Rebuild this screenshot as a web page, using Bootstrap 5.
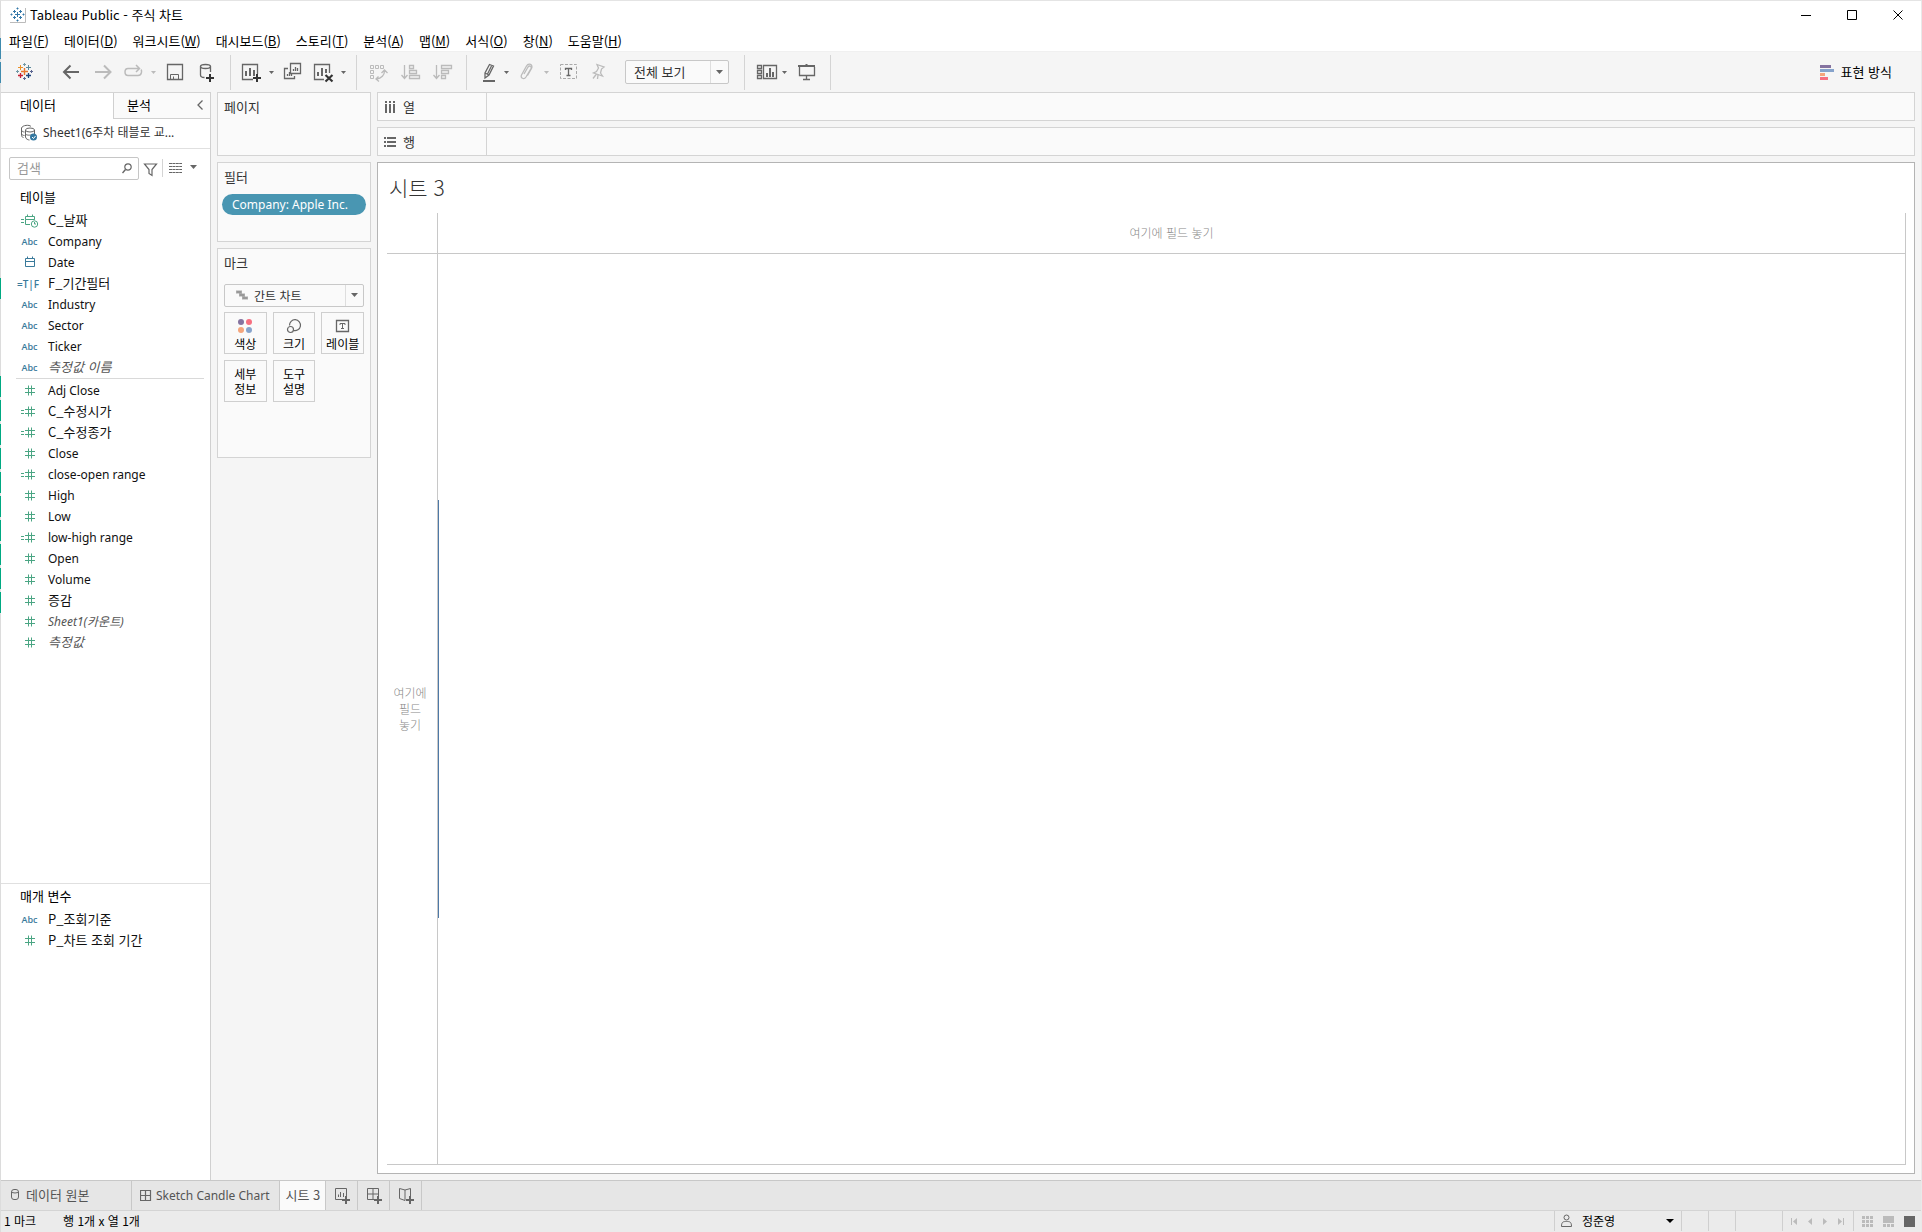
<!DOCTYPE html>
<html lang="ko">
<head>
<meta charset="utf-8">
<meta name="viewport" content="width=device-width, initial-scale=1">
<title>Tableau Public - 주식 차트</title>
<link href="https://cdn.jsdelivr.net/npm/bootstrap@5.3.0/dist/css/bootstrap.min.css" rel="stylesheet">
<style>
body{font-family:"Noto Sans CJK KR",sans-serif;font-size:13px;line-height:20px;color:#111;background:#fff}
.latin{font-family:"Noto Sans","Noto Sans CJK KR",sans-serif;font-size:12px}
button,select,input{font:inherit;color:inherit}
button{background:none;border:0;padding:0}
svg{display:block;flex:none;fill:none;stroke:#666}
.window{min-height:100vh;border-left:1px solid #dcdcdc;border-top:1px solid #e4e4e4;border-right:1px solid #e9e9e9;position:relative}
.edge{position:absolute;left:-1px;width:1px}
.edge-blue{top:37px;height:45px;background:repeating-linear-gradient(#3f8bae 0 21px,#e4e4e4 21px 24px)}
.edge-teal{top:277px;height:21px;background:#00a982}
.edge-teals{top:375px;height:238px;background:repeating-linear-gradient(#00a982 0 21px,#e4e4e4 21px 24px)}
.titlebar{height:30px;padding:3px 15px 6px 9px;color:#000}
.winbtns{gap:31px;padding-top:1px}
.menubar{height:20px;padding-left:8px;gap:15px;color:#000}
.menubar a{color:inherit;text-decoration:none;white-space:nowrap}
.toolbar{height:41px;background:#f5f5f5;padding-top:4px;border-top:1px solid #f0f0f0}
.tgroup{height:35px;padding:0 7px 0 6px;border-right:1px solid #d4d4d4;margin-top:-1px}
.tgroup:first-child{padding:0 8px 0 7px}
.dim svg,svg.dim{stroke:#bbb}
.caret{stroke:none;fill:#666}
.dim .caret,.caret.dim{fill:#bbb;stroke:none}
.pick{position:relative;border:1px solid #c8c8c8;border-radius:2px;background:#fafafa;display:flex}
.pick select{appearance:none;border:0;background:transparent;width:100%;padding:0;outline:0;color:#333}
.pick .drop{position:absolute;right:0;top:0;bottom:0;width:18px;border-left:1px solid #dedede;pointer-events:none;display:flex;align-items:center;justify-content:center}
.fitpick{width:104px;height:24px;margin:5px 8px 0 8px}
.fitpick select{padding-left:8px}
.showme{margin:6px 29px 0 auto;gap:6px;color:#000}
.side{width:210px;border-right:1px solid #d0d0d0;background:#fff}
.side-tabs{height:27px;border-top:1px solid #d4d4d4}
.side-tabs .tab-on{width:112px;padding:0 0 2px 19px;text-align:left;color:#000}
.side-tabs .tab-off{flex:1;padding:0 6px 1px 13px;background:#fafafa;border-left:1px solid #d0d0d0;border-bottom:1px solid #d0d0d0;color:#000}
.source{height:30px;padding:0 0 1px 19px;gap:5px;border-bottom:1px solid #e0e0e0;color:#333}
.tools{padding:8px 13px 0 8px;height:32px}
.search{flex:none;width:130px;height:23px;border:1px solid #c6c6c6;border-radius:2px;padding:0 6px 0 7px}
.search input{border:0;outline:0;width:100%;padding:0 0 1px;background:none;min-width:0}
.search input::placeholder{color:#999;opacity:1}
.sep{width:1px;height:18px;background:#d4d4d4;margin:2px 6px 0 4px}
.viewas{height:21px;gap:8px}
.sect{padding-left:19px;margin:0;font-size:13px;font-weight:400;color:#000}
.fields-h{height:29px;line-height:31px}
.params-h{height:25px;line-height:23px}
.fields{list-style:none;margin:0;padding:0}
.fields a{display:flex;height:21px;line-height:19px;padding-left:17px;color:#111;text-decoration:none;align-items:flex-start;gap:8px;white-space:nowrap}
.fields .latin a{line-height:21px}
.fields svg{stroke:#4aa583;width:22px;height:21px}
.fields .dimn svg{stroke:#3a7a9b}
.tag{width:22px;padding-left:1px;text-align:center;font:600 9px/22px "Open Sans",sans-serif;color:#3a7a9b}
.tag.tf{margin-left:-2px;margin-right:2px;font-size:10px;white-space:nowrap}
.fields i{color:#555}
.rule{border-top:1px solid #d9d9d9;margin:0 6px 1px 15px}
.params{height:297px;border-top:1px solid #e0e0e0}
.main{background:#f5f5f5}
.shelves{width:154px;margin:0 6px;gap:6px}
.panel{background:#fafafa;border:1px solid #d4d4d4;padding:4px 6px;color:#333}
.pages{height:64px}.filters{height:80px}.marks{height:210px}
.panel h2{font-size:13px;font-weight:400;line-height:20px;margin:0}
.pill{display:block;width:144px;height:21px;border-radius:11px;background:#4996b2;color:#fff;text-align:left;padding-left:10px;line-height:20px;margin:7px -3px 0 -2px}
.markpick{height:23px;margin-top:11px}
.markpick select{padding-left:29px;font-size:12px;line-height:20px}
.markpick .gantt{position:absolute;left:11px;top:5px;pointer-events:none}
.markgrid{display:grid;grid-template-columns:repeat(3,1fr);gap:6px;margin-top:5px}
.markgrid button{height:42px;border:1px solid #cfcfcf;font-size:12px;line-height:15px;color:#000;display:flex;flex-direction:column;align-items:center;justify-content:center}
.markgrid button.pic{justify-content:flex-start;padding-top:5px}
.work{margin-right:6px;gap:6px;min-width:0}
.shelf{height:29px;border:1px solid #d4d4d4;background:#fafafa}
.shelf>div{width:109px;border-right:1px solid #d4d4d4;padding-left:6px;gap:7px;color:#333}
.sheet{border:1px solid #b4b4b4;background:#fff;margin-bottom:6px;padding:8px 8px 8px 9px}
.sheet h1{font-size:21px;line-height:33px;font-weight:300;color:#333;margin:0;height:42px;padding-left:2px}
.crosstab{display:grid;grid-template-columns:51px 1fr;grid-template-rows:41px 1fr;border-right:1px solid #c8c8c8;border-bottom:1px solid #c8c8c8}
.crosstab>div{border-right:1px solid #c8c8c8;border-bottom:1px solid #c8c8c8;color:#888;font-size:12px;line-height:16px;font-weight:300}
.crosstab>.e{border-right:0}.crosstab>.s{border-bottom:0}
.crosstab>.rowdrop{padding-right:4px}
.plot{position:relative}
.axis-mark{position:absolute;left:0;top:27%;height:46%;width:1px;background:#4e79a7}
.sheettabs{height:30px;border-top:1px solid #c8c8c8;background:#e6e6e6;color:#555}
.sheettabs button{border-right:1px solid #c8c8c8;display:flex;align-items:center;gap:5px;white-space:nowrap}
.sheettabs .on{background:#fafafa;padding:0 5px 2px 6px}
.sheettabs .add{width:32px;padding-left:9px}
.sheettabs .t1{padding:0 0 2px 8px;width:131px}
.sheettabs .t2{padding:0 9px 0 8px;gap:4px}
.status{height:22px;border-top:1px solid #d4d4d4;background:#ebebeb;font-size:12px;color:#000}
.status .cell{border-left:1px solid #cfcfcf;height:20px;display:flex;align-items:center}
.markcount{width:62px;padding-left:3px}
.user{width:127px;padding:0 7px 0 6px;gap:10px}
.blank{width:27px}.blank.wide{width:47px}
.pager{width:71px;padding:0 8px;justify-content:space-between}
.views{width:68px;padding:0 6px 0 8px;justify-content:space-between}
.views svg,.pager svg{stroke:none;fill:#bbb}
.views svg.cur{fill:#666}
</style>
<script src="https://cdn.jsdelivr.net/npm/bootstrap@5.3.0/dist/js/bootstrap.bundle.min.js"></script>
</head>
<body>
<svg width="0" height="0" class="position-absolute" aria-hidden="true">
<defs>
<g id="hash"><path d="M7 8.500h10M7 12.500h10M10.500 5.500v10M13.500 5.500v10"/></g>
<g id="eq"><path d="M3 9.500h3M3 12.500h3"/></g>
</defs>
</svg>
<div class="window d-flex flex-column">
<span class="edge edge-blue"></span><span class="edge edge-teal"></span><span class="edge edge-teals"></span>

<header class="titlebar d-flex align-items-center">
<svg width="16" height="16" viewBox="0 0 16 16" style="stroke:#3478a8"><path d="M5 7.500h5M7.500 5v5M3 4.500h3M4.500 3v3M9 4.500h3M10.500 3v3M3 10.500h3M4.500 9v3M9 10.500h3M10.500 9v3M6.500 1.500h2M7.500 .5v2M6.500 13.500h2M7.500 12.500v2M1.500 6.500v2M.5 7.500h2M13.500 6.500v2M12.500 7.500h2"/><path d="M0 15.500h15.500V1" stroke="#bbb"/></svg>
<span class="ms-1">Tableau Public - 주식 차트</span>
<div class="winbtns d-flex ms-auto">
<button aria-label="최소화"><svg width="15" height="15" style="stroke:#000"><path d="M2 7.500h10"/></svg></button>
<button aria-label="최대화"><svg width="15" height="15" style="stroke:#000"><path d="M2.500 2.500h9v9h-9z"/></svg></button>
<button aria-label="닫기"><svg width="15" height="15" style="stroke:#000"><path d="M2.500 2.500l9 9M11.500 2.500l-9 9"/></svg></button>
</div>
</header>

<nav class="menubar d-flex">
<a href="#">파일(<u>F</u>)</a><a href="#">데이터(<u>D</u>)</a><a href="#">워크시트(<u>W</u>)</a><a href="#">대시보드(<u>B</u>)</a><a href="#">스토리(<u>T</u>)</a><a href="#">분석(<u>A</u>)</a><a href="#">맵(<u>M</u>)</a><a href="#">서식(<u>O</u>)</a><a href="#">창(<u>N</u>)</a><a href="#">도움말(<u>H</u>)</a>
</nav>

<div class="toolbar d-flex align-items-start">
<div class="tgroup d-flex">
<button aria-label="시작 페이지"><svg width="32" height="35"><path d="M13 16.500h7M16.500 13v7" stroke="#e8762d" stroke-width="1.400"/><path d="M10 12.500h5M12.500 10v5" stroke="#eb9129"/><path d="M18 12.500h5M20.500 10v5" stroke="#59879b"/><path d="M10 20.500h5M12.500 18v5" stroke="#c72035" stroke-width="1.300"/><path d="M18 20.500h5M20.500 18v5" stroke="#1f457e" stroke-width="1.300"/><path d="M15 9.500h3M16.500 8v3" stroke="#7199a6"/><path d="M15 23.500h3M16.500 22v3" stroke="#5b6591"/><path d="M8 16.500h3M9.500 15v3" stroke="#7199a6"/><path d="M22 16.500h3M23.500 15v3" stroke="#5b6591"/></svg></button>
</div>
<div class="tgroup d-flex">
<button aria-label="실행 취소"><svg width="32" height="35" stroke-width="2"><path d="M9 17h15M15.500 10.500L9 17l6.500 6.500"/></svg></button>
<button class="dim" aria-label="다시 실행"><svg width="32" height="35" stroke-width="2"><path d="M8 17h15M17 10.500l6.500 6.500-6.500 6.500"/></svg></button>
<button class="dim" aria-label="되풀이"><svg width="28" height="35" stroke-width="1.500"><path d="M20 13.500H9c-4 0-4 7 0 7h10c4 0 4-5 3-6M17 10l3.500 3.500L17 17"/></svg></button>
<button class="dim" aria-label="되풀이 옵션"><svg class="caret" width="12" height="35"><path d="M4 16h5l-2.500 3z"/></svg></button>
<button aria-label="저장"><svg width="32" height="35"><path d="M8.500 9.500h15v15h-15z" stroke-width="1.300"/><path d="M11.500 24v-4.500h8V24M14.500 24v-2.500" /></svg></button>
<button aria-label="새 데이터 원본"><svg width="32" height="35" stroke-width="1.300"><ellipse cx="14.500" cy="11.500" rx="5" ry="2"/><path d="M9.500 11.500V20c0 1.500 2 2.500 4 2.500M19.500 11.500V17"/><path d="M15 23h8M19 19v8" stroke="#333" stroke-width="2"/></svg></button>
</div>
<div class="tgroup d-flex">
<button aria-label="새 워크시트"><svg width="28" height="35"><path d="M16 24.500H5.500v-15h15V19" stroke-width="1.300"/><path d="M9 21v-5M13 21v-8M17 21v-6" stroke-width="2"/><path d="M16 23h8M20 19v8" stroke="#333" stroke-width="2"/></svg></button>
<button aria-label="새 워크시트 옵션"><svg class="caret" width="12" height="35"><path d="M4 16h5l-2.500 3z"/></svg></button>
<button aria-label="복제"><svg width="32" height="35" stroke-width="1.300"><path d="M13.500 8.500h10v10h-10zM11 13.500H7.500v10h10V21"/><path d="M16.500 16v-2M18.500 16v-4M20.500 16v-3M10.500 21v-2M12.500 21v-4M14.500 21v-2" /></svg></button>
<button aria-label="시트 지우기"><svg width="28" height="35"><path d="M15 24.500H5.500v-15h15V18" stroke-width="1.300"/><path d="M9 21v-4M13 21v-8M17 18v-4" stroke-width="2"/><path d="M16.500 20l7 6.500M23.500 20l-7 6.500" stroke="#333" stroke-width="2.200"/></svg></button>
<button aria-label="지우기 옵션"><svg class="caret" width="12" height="35"><path d="M4 16h5l-2.500 3z"/></svg></button>
</div>
<div class="tgroup d-flex dim">
<button aria-label="행과 열 바꾸기"><svg width="32" height="35"><path d="M7.500 10.500h3v3h-3zM12.500 10.500h3v3h-3zM17.500 10.500h3v3h-3zM7.500 15.500h3v3h-3zM7.500 20.500h3v3h-3z"/><path d="M21.500 16c0 4-3 7.500-8 8M18.500 18l3-3 3 3M15.500 21.500L13 24l3 2.500" stroke-width="1.300"/></svg></button>
<button aria-label="오름차순 정렬"><svg width="32" height="35" stroke-width="1.300"><path d="M9.500 10v13M6.500 20l3 3.500 3-3.500M14.500 10.500h4v3h-4zM14.500 15.500h7v3h-7zM14.500 20.500h10v3h-10z"/></svg></button>
<button aria-label="내림차순 정렬"><svg width="32" height="35" stroke-width="1.300"><path d="M9.500 10v13M6.500 20l3 3.500 3-3.500M14.500 10.500h10v3h-10zM14.500 15.500h7v3h-7zM14.500 20.500h4v3h-4z"/></svg></button>
</div>
<div class="tgroup d-flex">
<button aria-label="강조 표시"><svg width="28" height="35"><path d="M16.500 9.500l4 1.500-4.500 9-4 3v-5zM12 18l4 2M18.500 11l-4 8" stroke-width="1.300"/><path d="M10 26h12" stroke-width="2"/></svg></button>
<button aria-label="강조 표시 옵션"><svg class="caret" width="12" height="35"><path d="M3 16h5l-2.500 3z"/></svg></button>
<button class="dim" aria-label="그룹"><svg width="28" height="35" stroke-width="1.300"><path d="M11 19l4-7c1.500-2 4-.5 3 1.500L13 22c-2 3-6 1-4.500-2l5-9c2-3.500 7-1.500 5 2.500l-4 7"/></svg></button>
<button class="dim" aria-label="그룹 옵션"><svg class="caret" width="12" height="35"><path d="M3 16h5l-2.500 3z"/></svg></button>
<button aria-label="마크 레이블 표시"><svg width="32" height="35"><path d="M7.500 9.500h16v14h-16z" stroke="#aaa" stroke-dasharray="3 1.500"/><path d="M12.500 15v-1.500h6V15M15.500 13.500v7M13.500 20.500h4" stroke-width="1.300"/></svg></button>
<button class="dim" aria-label="축 고정"><svg width="32" height="35" stroke-width="1.300"><path d="M12 9.500l7 2.500-2.500 2-1 4 2 3-9-3 3-1.500 2-3.500zM11.500 19L8 23.500M13 20l-.5 4"/></svg></button>
<div class="pick fitpick"><select aria-label="맞춤"><option>전체 보기</option></select><span class="drop"><svg class="caret" width="7" height="5"><path d="M0 0h7L3.500 4z"/></svg></span></div>
</div>
<div class="tgroup d-flex">
<button aria-label="카드 표시"><svg width="28" height="35"><path d="M6.500 10.500h4v3h-4zM6.500 15.500h4v3h-4zM6.500 20.500h4v3h-4zM12.500 10.500h13v13h-13z" stroke-width="1.300"/><path d="M16 22v-4M19 22v-9M22 22v-5" stroke-width="2"/></svg></button>
<button aria-label="카드 옵션"><svg class="caret" width="12" height="35"><path d="M3 16h5l-2.500 3z"/></svg></button>
<button aria-label="프레젠테이션 모드"><svg width="32" height="35" stroke-width="1.300"><path d="M8.500 12v8.500h15V12M15.500 20.500v4M12 24.500h7"/><path d="M7 11h17M15.500 9v2" stroke-width="2"/></svg></button>
</div>
<button class="showme d-flex align-items-center"><svg width="15" height="16" style="stroke:none"><path d="M0 1h11v3H0z" fill="#8573a0"/><path d="M0 5h14v3H0z" fill="#86a3cb"/><path d="M0 9h5v3H0z" fill="#f5a57c"/><path d="M0 13h8v3H0z" fill="#f76f80"/></svg>표현 방식</button>
</div>

<div class="main d-flex flex-grow-1">
<aside class="side d-flex flex-column">
<div class="side-tabs d-flex"><button class="tab-on">데이터</button><button class="tab-off d-flex align-items-center justify-content-between">분석<svg width="8" height="10"><path d="M6.500 .5L2 5l4.500 4.500" stroke-width="1.300"/></svg></button></div>
<div class="source latin d-flex align-items-center"><svg width="18" height="18"><path d="M3.500 13.500c-2-1-2-1-2-2V4c1-3 8-3.500 9.500-1.500M1.500 6c0 1.500 2 2 3 2M1.500 9.500c0 1.500 2 2 3 2"/><ellipse cx="10" cy="6" rx="4.500" ry="2"/><path d="M5.500 6v7c0 2 3 3 4 3M14.500 6v4M5.500 9.500c0 2 5 2 7 1"/><circle cx="13.500" cy="13" r="3.500" fill="#3478a0" stroke="none"/><path d="M12 13l1.500 1.500 2-2.500" stroke="#fff"/></svg><span>Sheet1(6주차 태블로 교...</span></div>
<div class="tools d-flex">
<div class="search d-flex align-items-center"><input type="text" placeholder="검색" aria-label="검색"><svg width="10" height="11"><circle cx="6" cy="4" r="3.200" stroke-width="1.200"/><path d="M3.500 6.500L.5 10" stroke-width="1.400"/></svg></div>
<button class="ms-1" aria-label="필터"><svg width="15" height="15"><path d="M1.500 2h12l-4.500 5.500v6l-3-2v-4z" stroke-width="1.200"/></svg></button>
<span class="sep"></span>
<button class="viewas d-flex align-items-center" aria-label="보기 방식"><svg width="13" height="10"><path d="M0 .5h13M0 3.500h13M0 6.500h13M0 9.500h13" stroke-dasharray="3 .4"/></svg><svg class="caret" width="7" height="5"><path d="M0 0h7L3.500 4z"/></svg></button>
</div>
<h2 class="sect fields-h">테이블</h2>
<ul class="fields">
<li><a href="#"><svg><path d="M3 9.500h3M3 12.500h3M7.500 6.500h9v3h-9zM7.500 9.500v5H12M16.500 9.500V10M9.500 4.500v2M14.500 4.500v2"/><circle cx="16.500" cy="14" r="3.200"/><path d="M16.500 12v2h1.500"/></svg>C_날짜</a></li>
<li class="latin"><a href="#"><span class="tag">Abc</span>Company</a></li>
<li class="dimn latin"><a href="#"><svg><path d="M7.500 6.500h9v8h-9zM7.500 9.500h9M9.500 4.500v2M14.500 4.500v2"/></svg>Date</a></li>
<li><a href="#"><span class="tag tf">=T|F</span>F_기간필터</a></li>
<li class="latin"><a href="#"><span class="tag">Abc</span>Industry</a></li>
<li class="latin"><a href="#"><span class="tag">Abc</span>Sector</a></li>
<li class="latin"><a href="#"><span class="tag">Abc</span>Ticker</a></li>
<li><a href="#"><span class="tag">Abc</span><i>측정값 이름</i></a></li>
</ul>
<div class="rule"></div>
<ul class="fields flex-grow-1">
<li class="latin"><a href="#"><svg><use href="#hash"/></svg>Adj Close</a></li>
<li><a href="#"><svg><use href="#hash"/><use href="#eq"/></svg>C_수정시가</a></li>
<li><a href="#"><svg><use href="#hash"/><use href="#eq"/></svg>C_수정종가</a></li>
<li class="latin"><a href="#"><svg><use href="#hash"/></svg>Close</a></li>
<li class="latin"><a href="#"><svg><use href="#hash"/><use href="#eq"/></svg>close-open range</a></li>
<li class="latin"><a href="#"><svg><use href="#hash"/></svg>High</a></li>
<li class="latin"><a href="#"><svg><use href="#hash"/></svg>Low</a></li>
<li class="latin"><a href="#"><svg><use href="#hash"/><use href="#eq"/></svg>low-high range</a></li>
<li class="latin"><a href="#"><svg><use href="#hash"/></svg>Open</a></li>
<li class="latin"><a href="#"><svg><use href="#hash"/></svg>Volume</a></li>
<li><a href="#"><svg><use href="#hash"/></svg>증감</a></li>
<li class="latin"><a href="#"><svg><use href="#hash"/></svg><i>Sheet1(카운트)</i></a></li>
<li><a href="#"><svg><use href="#hash"/></svg><i>측정값</i></a></li>
</ul>
<div class="params">
<h2 class="sect params-h">매개 변수</h2>
<ul class="fields">
<li><a href="#"><span class="tag">Abc</span>P_조회기준</a></li>
<li><a href="#"><svg><use href="#hash"/></svg>P_차트 조회 기간</a></li>
</ul>
</div>
</aside>

<section class="shelves d-flex flex-column">
<div class="panel pages"><h2>페이지</h2></div>
<div class="panel filters"><h2>필터</h2><button class="pill latin">Company: Apple Inc.</button></div>
<div class="panel marks"><h2>마크</h2>
<div class="pick markpick"><svg class="gantt" width="13" height="11"><path d="M0 2h6M3 5h6M6 8h6" stroke="#aaa" stroke-width="3"/><path d="M1 2h4M4 5h4M7 8h4" stroke="#888"/></svg><select aria-label="마크 유형"><option>간트 차트</option></select><span class="drop"><svg class="caret" width="7" height="5"><path d="M0 0h7L3.500 4z"/></svg></span></div>
<div class="markgrid">
<button class="pic"><svg width="16" height="18" style="stroke:none"><circle cx="4" cy="4" r="3" fill="#8573a0"/><circle cx="12" cy="4" r="3" fill="#f76f80"/><circle cx="4" cy="12" r="3" fill="#f5a57c"/><circle cx="12" cy="12" r="3" fill="#86a3cb"/></svg><span>색상</span></button>
<button class="pic"><svg width="16" height="18" stroke-width="1.200"><path d="M3.500 7.500a5.500 5.500 0 1 1 4 5"/><circle cx="4.500" cy="11.500" r="3"/></svg><span>크기</span></button>
<button class="pic"><svg width="16" height="18"><path d="M1.500 2.500h12v11h-12z" stroke-width="1.300"/><path d="M5 7V5.500h5V7M7.500 5.500v5M6 10.500h3"/></svg><span>레이블</span></button>
<button>세부<br>정보</button>
<button>도구<br>설명</button>
</div>
</div>
</section>

<main class="work d-flex flex-column flex-grow-1">
<div class="shelf d-flex"><div class="d-flex align-items-center"><svg width="12" height="12" stroke-width="2"><path d="M2 0v2M6 0v2M10 0v2M2 3v9M6 3v9M10 3v9"/></svg>열</div></div>
<div class="shelf d-flex"><div class="d-flex align-items-center"><svg width="12" height="12" stroke-width="2"><path d="M0 2h2M0 6h2M0 10h2M3 2h9M3 6h9M3 10h9"/></svg>행</div></div>
<section class="sheet flex-grow-1 d-flex flex-column">
<h1>시트 3</h1>
<div class="crosstab flex-grow-1">
<div></div>
<div class="e d-flex align-items-center justify-content-center">여기에 필드 놓기</div>
<div class="s rowdrop d-flex align-items-center justify-content-center text-center">여기에<br>필드<br>놓기</div>
<div class="e s plot"><span class="axis-mark"></span></div>
</div>
</section>
</main>
</div>

<nav class="sheettabs d-flex">
<button class="t1"><svg width="12" height="14"><rect x="2.500" y="1.500" width="7" height="10" rx="2.500"/><path d="M3 4.500q3 1 6 0"/></svg>데이터 원본</button>
<button class="t2 latin"><svg width="12" height="12"><path d="M.5 .5h10v10H.5zM.5 5.500h10M5.500 .5v10" stroke-width="1.200"/></svg>Sketch Candle Chart</button>
<button class="on">시트 3</button>
<button class="add" aria-label="새 워크시트"><svg width="17" height="17"><path d="M9 12.500H.5V1.500h11V9M3.500 10V7.500M5.500 10V5M8.500 10V6"/><path d="M7 13h8M11 9v8" stroke-width="2"/></svg></button>
<button class="add" aria-label="새 대시보드"><svg width="17" height="17"><path d="M8 12.500H.5V1.500h11V9M.5 7h11M6 1.500v11"/><path d="M7 13h8M11 9v8" stroke-width="2"/></svg></button>
<button class="add" aria-label="새 스토리"><svg width="17" height="17"><path d="M6 13.500l-5.500-2V1.500L6 3l5.500-1.500V9M6 3v10.500"/><path d="M7 13h8M11 9v8" stroke-width="2"/></svg></button>
</nav>

<footer class="status d-flex">
<span class="markcount">1 마크</span><span>행 1개 x 열 1개</span>
<div class="cell user ms-auto"><svg width="11" height="14"><circle cx="5.500" cy="3.500" r="2.500"/><path d="M.5 12.500c0-5 2-5 5-5s5 0 5 5z"/></svg>정준영<svg class="caret ms-auto" width="8" height="5" style="fill:#000"><path d="M0 0h8L4 4z"/></svg></div>
<div class="cell blank"></div><div class="cell blank"></div><div class="cell blank wide"></div>
<div class="cell pager"><svg width="7" height="7"><path d="M0 0h1v7H0zM6 0v7L2 3.500z"/></svg><svg width="5" height="7"><path d="M4 0v7L0 3.500z"/></svg><svg width="5" height="7"><path d="M0 0v7l4-3.500z"/></svg><svg width="7" height="7"><path d="M0 0v7l4-3.500zM5 0h1v7H5z"/></svg></div>
<div class="cell views"><svg width="11" height="11"><path d="M0 0h3v3H0zM4 0h3v3H4zM8 0h3v3H8zM0 4h3v3H0zM4 4h3v3H4zM8 4h3v3H8zM0 8h3v3H0zM4 8h3v3H4zM8 8h3v3H8z"/></svg><svg width="11" height="11"><path d="M0 0h11v7H0zM0 8h3v3H0zM4 8h3v3H4zM8 8h3v3H8z"/></svg><svg class="cur" width="11" height="11"><path d="M0 0h11v11H0z"/></svg></div>
</footer>
</div>
</body>
</html>
